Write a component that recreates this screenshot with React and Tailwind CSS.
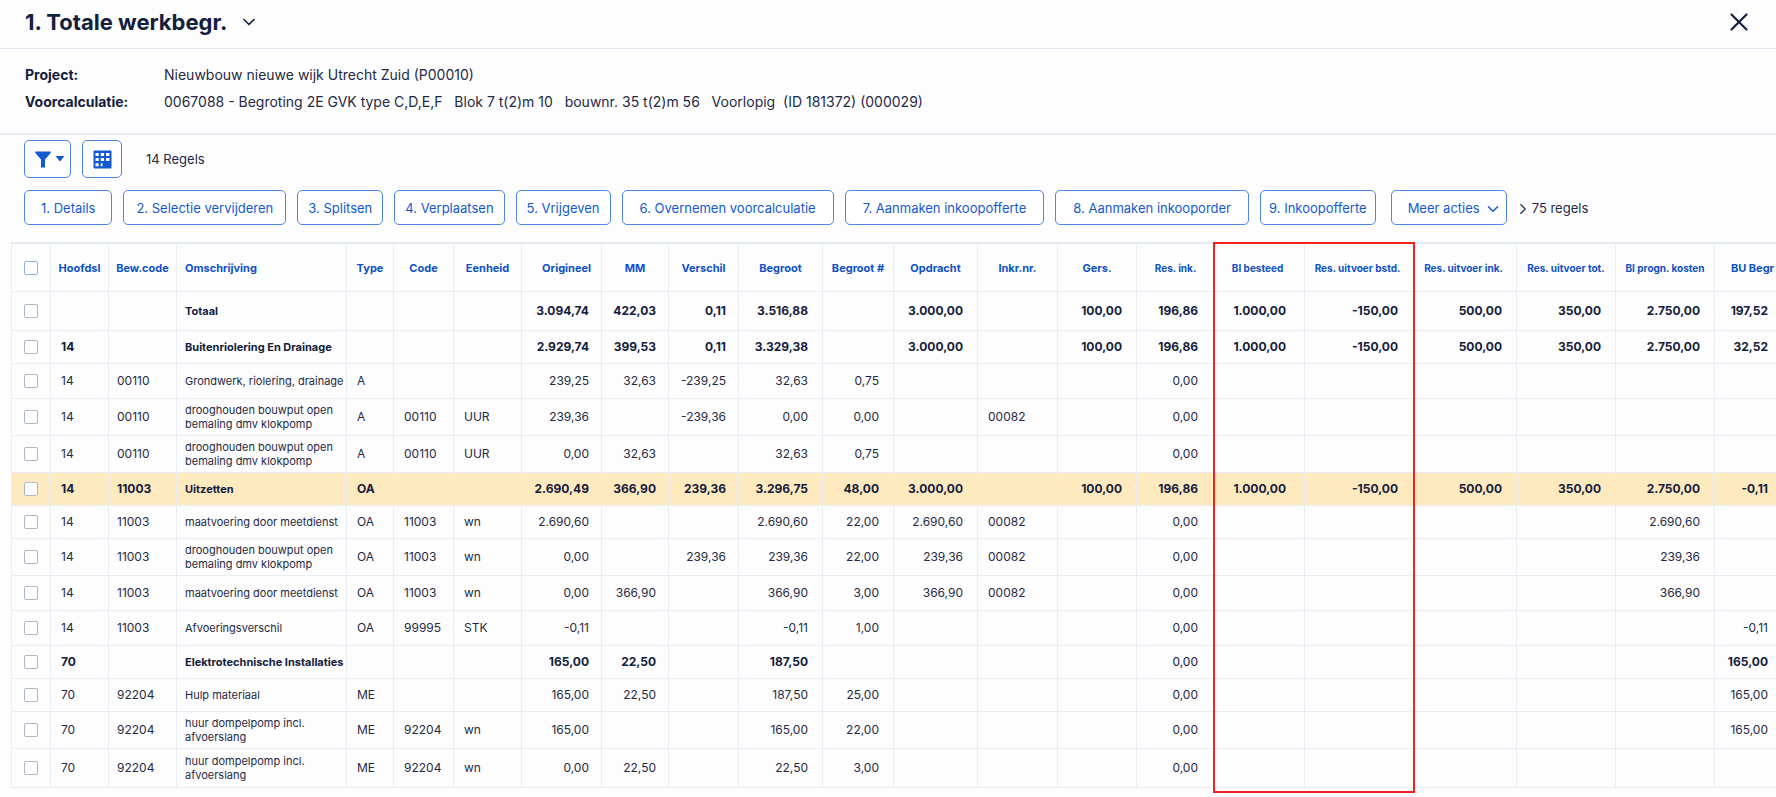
import { useState } from "react";
import { ChevronDown, ChevronRight, X } from "lucide-react";
import clsx from "clsx";

const actions = [
  { label: "1. Details", pad: "px-4" },
  { label: "2. Selectie vervijderen", pad: "px-3" },
  { label: "3. Splitsen", pad: "px-2.5" },
  { label: "4. Verplaatsen", pad: "px-2.5" },
  { label: "5. Vrijgeven", pad: "px-2.5" },
  { label: "6. Overnemen voorcalculatie", pad: "px-[17px]" },
  { label: "7. Aanmaken inkoopofferte", pad: "px-[17px]" },
  { label: "8. Aanmaken inkooporder", pad: "px-[17px]" },
  { label: "9. Inkoopofferte", pad: "px-2" },
];

const columns = [
  { key: "hoofdsl", label: "Hoofdsl", width: "w-[58px]", cell: "pl-2.5" },
  { key: "bew", label: "Bew.code", width: "w-[68px]", cell: "pl-2" },
  { key: "oms", label: "Omschrijving", width: "w-[170px]", head: "text-left pl-2", cell: "pl-2 text-[11px] leading-[14px]" },
  { key: "type", label: "Type", width: "w-[47px]", cell: "pl-2.5" },
  { key: "code", label: "Code", width: "w-[60px]", cell: "pl-2.5" },
  { key: "eenheid", label: "Eenheid", width: "w-[68px]", cell: "pl-2.5" },
  { key: "origineel", label: "Origineel", width: "w-[80px]", head: "text-right pr-2.5", cell: "text-right pr-3" },
  { key: "mm", label: "MM", width: "w-[67px]", cell: "text-right pr-3" },
  { key: "verschil", label: "Verschil", width: "w-[70px]", cell: "text-right pr-3" },
  { key: "begroot", label: "Begroot", width: "w-[84px]", cell: "text-right pr-3.5" },
  { key: "begrootNr", label: "Begroot #", width: "w-[71px]", cell: "text-right pr-3.5" },
  { key: "opdracht", label: "Opdracht", width: "w-[84px]", cell: "text-right pr-3.5" },
  { key: "inkr", label: "Inkr.nr.", width: "w-[80px]", cell: "pl-2.5" },
  { key: "gers", label: "Gers.", width: "w-[79px]", cell: "text-right pr-3.5" },
  { key: "resInk", label: "Res. ink.", width: "w-[78px]", small: true, cell: "text-right pr-4" },
  { key: "besteed", label: "BI besteed", width: "w-[90px]", small: true, head: "pr-1", cell: "text-right pr-[18px]" },
  { key: "uitvBstd", label: "Res. uitvoer bstd.", width: "w-[110px]", small: true, head: "pr-1", cell: "text-right pr-4" },
  { key: "uitvInk", label: "Res. uitvoer ink.", width: "w-[102px]", small: true, head: "pr-1", cell: "text-right pr-3.5" },
  { key: "uitvTot", label: "Res. uitvoer tot.", width: "w-[99px]", small: true, cell: "text-right pr-3.5" },
  { key: "progn", label: "BI progn. kosten", width: "w-[99px]", small: true, cell: "text-right pr-3.5" },
  { key: "buBegr", label: "BU Begr", cell: "text-right pr-[22px]" },
];

const rows = [
  { h: "h-[39px]", bold: true, oms: "Totaal", origineel: "3.094,74", mm: "422,03", verschil: "0,11", begroot: "3.516,88", opdracht: "3.000,00", gers: "100,00", resInk: "196,86", besteed: "1.000,00", uitvBstd: "-150,00", uitvInk: "500,00", uitvTot: "350,00", progn: "2.750,00", buBegr: "197,52" },
  { h: "h-[33px]", bold: true, hoofdsl: "14", oms: "Buitenriolering En Drainage", origineel: "2.929,74", mm: "399,53", verschil: "0,11", begroot: "3.329,38", opdracht: "3.000,00", gers: "100,00", resInk: "196,86", besteed: "1.000,00", uitvBstd: "-150,00", uitvInk: "500,00", uitvTot: "350,00", progn: "2.750,00", buBegr: "32,52" },
  { h: "h-[35px]", hoofdsl: "14", bew: "00110", oms: "Grondwerk, riolering, drainage", type: "A", origineel: "239,25", mm: "32,63", verschil: "-239,25", begroot: "32,63", begrootNr: "0,75", resInk: "0,00" },
  { h: "h-[37px]", hoofdsl: "14", bew: "00110", oms: "drooghouden bouwput open bemaling dmv klokpomp", type: "A", code: "00110", eenheid: "UUR", origineel: "239,36", verschil: "-239,36", begroot: "0,00", begrootNr: "0,00", inkr: "00082", resInk: "0,00" },
  { h: "h-[37px]", hoofdsl: "14", bew: "00110", oms: "drooghouden bouwput open bemaling dmv klokpomp", type: "A", code: "00110", eenheid: "UUR", origineel: "0,00", mm: "32,63", begroot: "32,63", begrootNr: "0,75", resInk: "0,00" },
  { h: "h-[33px]", bold: true, active: true, hoofdsl: "14", bew: "11003", oms: "Uitzetten", type: "OA", origineel: "2.690,49", mm: "366,90", verschil: "239,36", begroot: "3.296,75", begrootNr: "48,00", opdracht: "3.000,00", gers: "100,00", resInk: "196,86", besteed: "1.000,00", uitvBstd: "-150,00", uitvInk: "500,00", uitvTot: "350,00", progn: "2.750,00", buBegr: "-0,11" },
  { h: "h-[33px]", hoofdsl: "14", bew: "11003", oms: "maatvoering door meetdienst", type: "OA", code: "11003", eenheid: "wn", origineel: "2.690,60", begroot: "2.690,60", begrootNr: "22,00", opdracht: "2.690,60", inkr: "00082", resInk: "0,00", progn: "2.690,60" },
  { h: "h-[37px]", hoofdsl: "14", bew: "11003", oms: "drooghouden bouwput open bemaling dmv klokpomp", type: "OA", code: "11003", eenheid: "wn", origineel: "0,00", verschil: "239,36", begroot: "239,36", begrootNr: "22,00", opdracht: "239,36", inkr: "00082", resInk: "0,00", progn: "239,36" },
  { h: "h-[35px]", hoofdsl: "14", bew: "11003", oms: "maatvoering door meetdienst", type: "OA", code: "11003", eenheid: "wn", origineel: "0,00", mm: "366,90", begroot: "366,90", begrootNr: "3,00", opdracht: "366,90", inkr: "00082", resInk: "0,00", progn: "366,90" },
  { h: "h-[35px]", hoofdsl: "14", bew: "11003", oms: "Afvoeringsverschil", type: "OA", code: "99995", eenheid: "STK", origineel: "-0,11", begroot: "-0,11", begrootNr: "1,00", resInk: "0,00", buBegr: "-0,11" },
  { h: "h-[33px]", bold: true, hoofdsl: "70", oms: "Elektrotechnische Installaties", origineel: "165,00", mm: "22,50", begroot: "187,50", resInk: "0,00", buBegr: "165,00" },
  { h: "h-[33px]", hoofdsl: "70", bew: "92204", oms: "Hulp materiaal", type: "ME", origineel: "165,00", mm: "22,50", begroot: "187,50", begrootNr: "25,00", resInk: "0,00", buBegr: "165,00" },
  { h: "h-[37px]", hoofdsl: "70", bew: "92204", oms: "huur dompelpomp incl. afvoerslang", type: "ME", code: "92204", eenheid: "wn", origineel: "165,00", begroot: "165,00", begrootNr: "22,00", resInk: "0,00", buBegr: "165,00" },
  { h: "h-[39px]", hoofdsl: "70", bew: "92204", oms: "huur dompelpomp incl. afvoerslang", type: "ME", code: "92204", eenheid: "wn", origineel: "0,00", mm: "22,50", begroot: "22,50", begrootNr: "3,00", resInk: "0,00" },
];

const outline = "rounded-[5px] border border-[#4c86e6] bg-white text-[#1259d0] hover:bg-blue-50";

function FilterIcon() {
  return (
    <svg width="16" height="17" viewBox="0 0 16 17" fill="currentColor" aria-hidden="true">
      <path d="M0.3 0.5h15.4v1.6L10 8.4v8.1H6V8.4L0.3 2.1z" />
    </svg>
  );
}

function GridIcon() {
  return (
    <svg width="19" height="19" viewBox="0 0 19 19" aria-hidden="true">
      <rect x="0.5" y="0.5" width="18" height="18" rx="1" fill="currentColor" />
      <path
        d="M2.5 3h3.2v3H2.5zM7.7 3h3.4v3H7.7zM13 3h3.4v3H13zM2.5 8h3.2v3H2.5zM7.7 8h3.4v3H7.7zM13 8h3.4v3H13zM2.5 13.2h3.2v3H2.5zM7.7 13.2h1.8v3H7.7z"
        fill="#fff"
      />
    </svg>
  );
}

function Check({ label, head, checked, onChange }) {
  return (
    <input
      type="checkbox"
      aria-label={label}
      checked={checked}
      onChange={onChange}
      className={clsx(
        "block mx-auto size-3.5 appearance-none rounded-xs border bg-white checked:bg-[#1259d0]",
        head ? "border-[#8db2ea]" : "border-[#adb6ca]"
      )}
    />
  );
}

export default function App() {
  const [selected, setSelected] = useState([]);

  const toggle = (i) =>
    setSelected((s) => (s.includes(i) ? s.filter((x) => x !== i) : [...s, i]));

  const toggleAll = () =>
    setSelected((s) => (s.length === rows.length ? [] : rows.map((_, i) => i)));

  return (
    <div className="min-h-screen bg-[#fdfdfe] font-['Inter','Liberation_Sans',sans-serif] text-[#1f2a44]">
      <header className="flex h-[49px] items-center justify-between border-b border-[#dfe6f1] pb-1 pl-[25px] pr-[22px]">
        <div className="flex items-center gap-3 text-[#13203c]">
          <h1 className="text-[22px] font-bold leading-7">1. Totale werkbegr.</h1>
          <button aria-label="Kies weergave">
            <ChevronDown size={20} strokeWidth={2} />
          </button>
        </div>
        <button aria-label="Sluiten" className="text-[#13203c]">
          <X size={30} strokeWidth={1.7} />
        </button>
      </header>

      <dl className="grid grid-cols-[139px_1fr] border-b-2 border-[#e9edf3] pt-3 pb-[18px] pl-[25px] text-sm leading-[27px]">
        <dt className="font-bold text-[#13203c]">Project:</dt>
        <dd>Nieuwbouw nieuwe wijk Utrecht Zuid (P00010)</dd>
        <dt className="font-bold text-[#13203c]">Voorcalculatie:</dt>
        <dd className="whitespace-pre">
          {"0067088 - Begroting 2E GVK type C,D,E,F   Blok 7 t(2)m 10   bouwnr. 35 t(2)m 56   Voorlopig  (ID 181372) (000029)"}
        </dd>
      </dl>

      <div className="pt-[5px] pl-6 text-[13px]">
        <div className="flex items-center">
          <button aria-label="Filter" className={clsx(outline, "flex h-[38px] w-[47px] items-center justify-center gap-1 pl-1")}>
            <FilterIcon />
            <svg width="10" height="6" viewBox="0 0 10 6" fill="currentColor" aria-hidden="true">
              <path d="M0.5 0h9L5 5.6z" />
            </svg>
          </button>
          <button aria-label="Kolommen" className={clsx(outline, "ml-[11px] flex h-[38px] w-10 items-center justify-center")}>
            <GridIcon />
          </button>
          <span className="ml-6 pt-0.5">14 Regels</span>
        </div>

        <div className="mt-3 flex items-center gap-[11px] whitespace-nowrap">
          {actions.map((a) => (
            <button key={a.label} className={clsx(outline, a.pad, "h-[35px] pt-0.5")}>
              {a.label}
            </button>
          ))}
          <button className={clsx(outline, "ml-1 flex h-[35px] items-center gap-1 pt-0.5 pl-4 pr-1")}>
            Meer acties
            <ChevronDown size={18} />
          </button>
          <span className="flex items-center pt-0.5">
            <ChevronRight size={18} strokeWidth={1.5} className="-ml-1" />
            75 regels
          </span>
        </div>
      </div>

      <div className="mt-[17px] ml-[11px] overflow-x-auto pb-[5px] [scrollbar-width:none]">
        <div className="relative min-w-[1779px]">
          <table className="w-full table-fixed border-separate border-spacing-0 border-t-2 border-[#e6ebf3] text-xs">
            <colgroup>
              <col className="w-[39px]" />
              {columns.map((c) => (
                <col key={c.key} className={c.width} />
              ))}
            </colgroup>
            <thead>
              <tr className="h-12 text-[11px] text-[#0d51c6]">
                <th className="border-b border-l border-[#e9edf4]">
                  <Check head label="Alles selecteren" checked={selected.length === rows.length} onChange={toggleAll} />
                </th>
                {columns.map((c) => (
                  <th
                    key={c.key}
                    className={clsx("whitespace-nowrap border-b border-l border-[#e9edf4] pt-0.5 font-bold", c.small && "text-[10px]", c.head)}
                  >
                    {c.label}
                  </th>
                ))}
              </tr>
            </thead>
            <tbody>
              {rows.map((r, i) => (
                <tr key={i} className={clsx(r.h, r.bold && "font-bold text-[#13203c]", r.active && "bg-[#ffe9bf]")}>
                  <td className="border-b border-l border-[#e9edf4]">
                    <Check label={`Regel ${i + 1}`} checked={selected.includes(i)} onChange={() => toggle(i)} />
                  </td>
                  {columns.map((c) => (
                    <td
                      key={c.key}
                      className={clsx("border-b border-l border-[#e9edf4]", c.cell, r[c.key] === "0,00" && "font-normal")}
                    >
                      {r[c.key]}
                    </td>
                  ))}
                </tr>
              ))}
            </tbody>
          </table>
          {/* marks the two highlighted columns */}
          <div className="pointer-events-none absolute top-0 -bottom-[5px] left-[1202px] w-[202px] border-2 border-[#f5211f]" />
        </div>
      </div>
    </div>
  );
}
